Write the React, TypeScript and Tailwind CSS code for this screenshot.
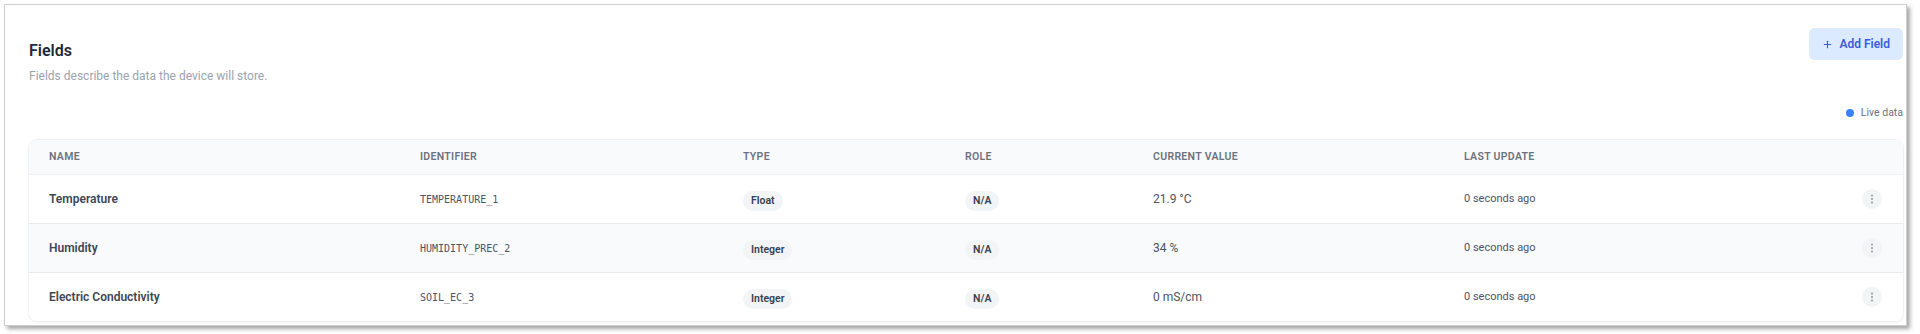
import { MoreVertical, Plus } from "lucide-react";

interface Field {
  name: string;
  identifier: string;
  type: string;
  role: string;
  value: string;
  updated: string;
}

const FIELDS: Field[] = [
  { name: "Temperature", identifier: "TEMPERATURE_1", type: "Float", role: "N/A", value: "21.9 °C", updated: "0 seconds ago" },
  { name: "Humidity", identifier: "HUMIDITY_PREC_2", type: "Integer", role: "N/A", value: "34 %", updated: "0 seconds ago" },
  { name: "Electric Conductivity", identifier: "SOIL_EC_3", type: "Integer", role: "N/A", value: "0 mS/cm", updated: "0 seconds ago" },
];

const COLS = "grid grid-cols-[371px_323px_222px_188px_311px_1fr_auto] items-center";

function Badge({ children }: { children: string }) {
  return (
    <span className="inline-flex h-[20px] items-center rounded-full bg-[#f3f4f6] px-2 text-[10.5px] font-semibold text-[#374151]">
      {children}
    </span>
  );
}

export default function App() {
  return (
    <div className="h-[334px] w-[1920px] bg-white pl-[4px] pt-[4px] font-['Roboto',sans-serif]">
      <div className="h-[322px] w-[1903px] border border-[#cfcfcf] bg-white pl-[24px] pr-[3px] pt-[23px] shadow-[3px_3px_4px_rgba(0,0,0,0.35)]">
        {/* Header */}
        <div className="flex items-start justify-between">
          <div className="pt-[9px]">
            <h2 className="text-[16px] font-semibold leading-7 text-[#1f2937]">Fields</h2>
            <p className="mt-[1px] text-[12px] leading-5 text-[#9ca3af]">Fields describe the data the device will store.</p>
          </div>
          <button className="flex h-[32px] items-center gap-[6px] rounded-md bg-[#dbeafe] px-[13px] text-[12px] font-semibold text-[#3b5bdb]">
            <Plus className="h-[11px] w-[11px]" strokeWidth={2.5} />
            Add Field
          </button>
        </div>

        <div className="mt-[19px] flex items-center justify-end gap-[7px] text-[10.5px] leading-4 text-[#6b7280]">
          <span className="h-[8px] w-[8px] rounded-full bg-[#3b82f6]" />
          Live data
        </div>

        {/* Table */}
        <div className="mt-[19px] overflow-hidden rounded-lg bg-white shadow-[0_1px_3px_rgba(0,0,0,0.08)] ring-1 ring-[#f1f1f3]">
          <div className={`${COLS} h-[35px] border-b border-[#f0f1f3] bg-[#f9fafb] text-[10.5px] font-semibold uppercase tracking-[0.03em] text-[#6b7280]`}>
            <div className="pl-5">Name</div>
            <div className="pl-5">Identifier</div>
            <div className="pl-5">Type</div>
            <div className="pl-5">Role</div>
            <div className="pl-5">Current Value</div>
            <div className="pl-5">Last Update</div>
            <div className="w-[61px]" />
          </div>
          {FIELDS.map((f, i) => (
            <div
              key={f.identifier}
              className={`${COLS} h-[48px] ${i > 0 ? "h-[49px] border-t border-[#e9ebee]" : ""} ${i % 2 === 1 ? "bg-[#f9fafb]" : "bg-white"}`}
            >
              <div className="pl-5 text-[12px] font-semibold text-[#3f4654]">{f.name}</div>
              <div className="pl-5 font-['DejaVu_Sans_Mono',monospace] text-[10px] text-[#4b5563]">{f.identifier}</div>
              <div className="pl-5"><Badge>{f.type}</Badge></div>
              <div className="pl-5"><Badge>{f.role}</Badge></div>
              <div className="pl-5 text-[12px] text-[#4b5563]">{f.value}</div>
              <div className="pl-5 text-[11px] text-[#4b5563]">{f.updated}</div>
              <div className="flex w-[61px] justify-end pr-[21px]">
                <span className="flex h-[20px] w-[20px] items-center justify-center rounded-full bg-[#f3f4f6] text-[#9ca3af]">
                  <MoreVertical className="h-[12px] w-[12px]" strokeWidth={2.5} />
                </span>
              </div>
            </div>
          ))}
        </div>
      </div>
    </div>
  );
}
